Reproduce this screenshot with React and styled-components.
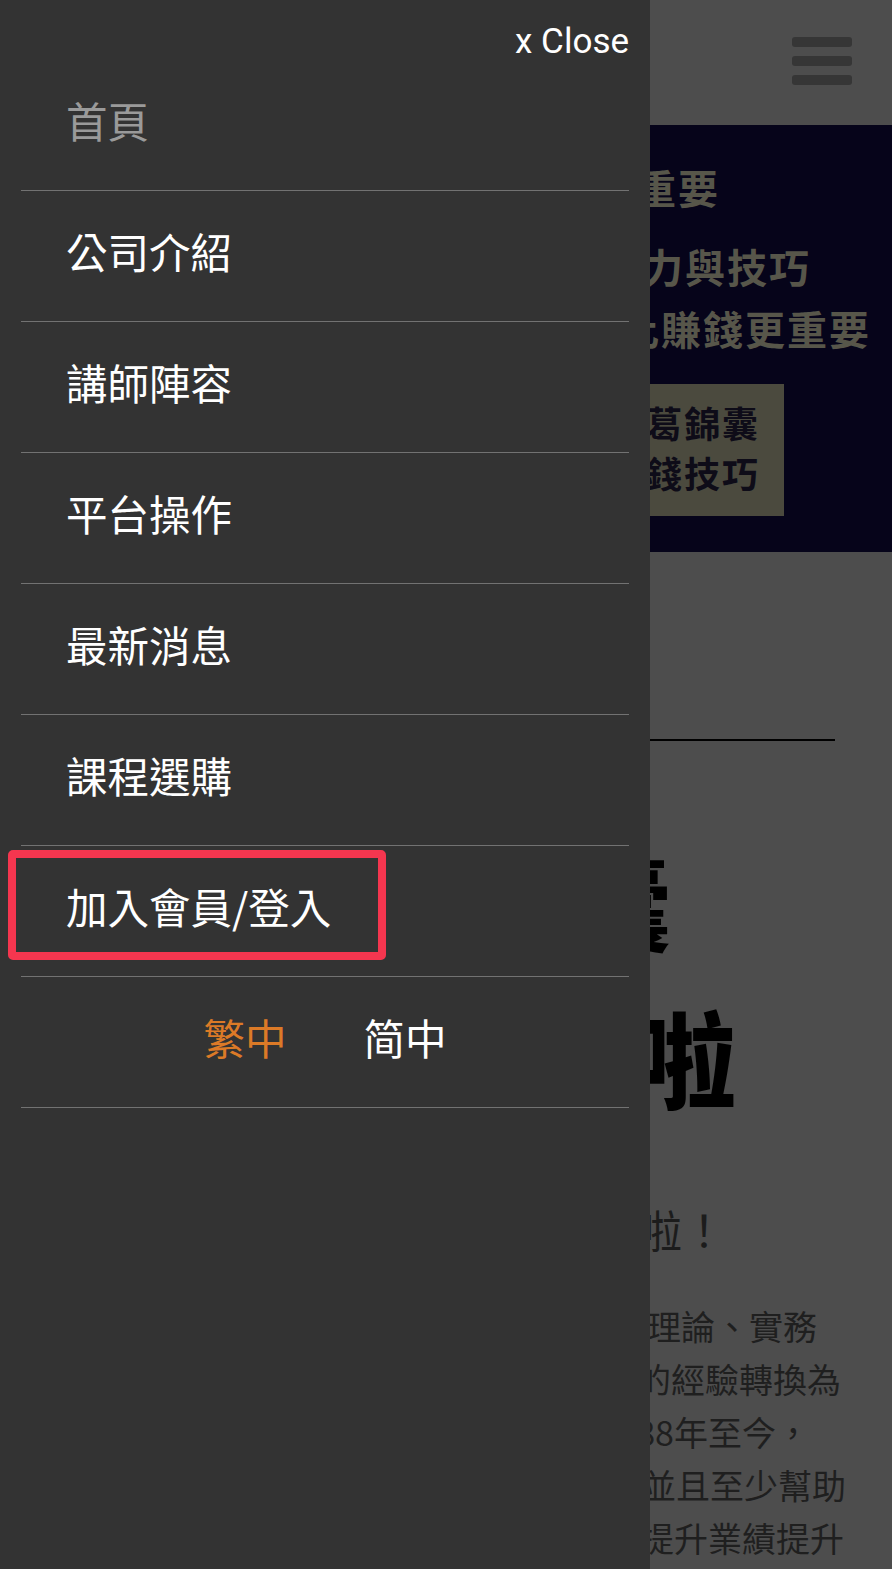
import React from "react";
import styled, { createGlobalStyle } from "styled-components";

const GlobalStyle = createGlobalStyle`
  html, body {
    margin: 0;
    padding: 0;
    background: #4d4d4d;
  }
  body {
    font-family: "Noto Sans CJK TC", "Noto Sans", sans-serif;
    overflow: hidden;
  }
  *, *::before, *::after { box-sizing: border-box; }
`;

/* ---------- dimmed page behind the drawer ---------- */

const Page = styled.div`
  width: 100%;
  min-height: 100vh;
  background: #4d4d4d;
  overflow: hidden;
`;

const Header = styled.header`
  height: 125px;
  display: flex;
  justify-content: flex-end;
  padding: 37px 40px 0 0;
  background: #4d4d4d;
`;

const Burger = styled.button`
  display: flex;
  flex-direction: column;
  gap: 9px;
  width: 60px;
  padding: 0;
  border: none;
  background: none;
`;

const BurgerBar = styled.span`
  display: block;
  height: 10px;
  border-radius: 3px;
  background: #363636;
`;

const Banner = styled.section`
  background: #06041a;
  padding: 37px 0 36px;
  display: flex;
  flex-direction: column;
  gap: 12px;
`;

const BannerLine = styled.div`
  font-size: 40px;
  font-weight: 700;
  line-height: 50px;
  letter-spacing: 2px;
  color: #57564a;
  white-space: nowrap;
  text-align: right;
  padding-right: ${(p) => p.$right}px;
  margin-bottom: ${(p) => p.$after || 0}px;
`;

const Badge = styled.div`
  align-self: flex-end;
  margin: 19px 108px 0 0;
  padding: 13px 24px 19px 40px;
  background: #4b4a3e;
`;

const BadgeLine = styled.div`
  font-size: 36px;
  font-weight: 700;
  line-height: 50px;
  letter-spacing: 2px;
  color: #0e0c18;
  white-space: nowrap;
  text-align: right;
`;

const Content = styled.section`
  padding-top: 187px;
  display: flex;
  flex-direction: column;
`;

const Rule = styled.hr`
  margin: 0 57px;
  border: none;
  height: 2px;
  background: #000;
`;

const BigTitle = styled.h1`
  margin: 82px 0 0;
  font-size: 104px;
  font-weight: 900;
  line-height: 155px;
  color: #000;
`;

const BigLine = styled.span`
  display: block;
  white-space: nowrap;
  text-align: right;
  padding-right: ${(p) => p.$right}px;
`;

const SubTitle = styled.h2`
  margin: 66px 0 0;
  font-size: 44px;
  font-weight: 400;
  line-height: 60px;
  color: #1c1c1c;
  white-space: nowrap;
  text-align: right;
  padding-right: 166px;
`;

const Paragraph = styled.p`
  margin: 40px 0 0;
  font-size: 34px;
  line-height: 53px;
  color: #1f1f1f;
`;

const ParaLine = styled.span`
  display: block;
  white-space: nowrap;
  text-align: right;
  padding-right: ${(p) => p.$right}px;
`;

/* ---------- drawer ---------- */

const Drawer = styled.nav`
  position: fixed;
  top: 0;
  left: 0;
  bottom: 0;
  width: 650px;
  background: #333333;
  display: flex;
  flex-direction: column;
`;

const CloseBar = styled.div`
  height: 60px;
  padding: 21px 21px 0 0;
  display: flex;
  justify-content: flex-end;
  align-items: flex-start;
`;

const CloseButton = styled.button`
  padding: 0;
  border: none;
  background: none;
  font-family: Roboto, "Liberation Sans", sans-serif;
  font-size: 35px;
  line-height: 42px;
  color: #ffffff;
  cursor: pointer;
`;

const MenuList = styled.ul`
  list-style: none;
  margin: 0 21px;
  padding: 0;
`;

const MenuItem = styled.li`
  position: relative;
  height: 131px;
  padding: 0 0 10px 45px;
  border-bottom: 1px solid #727272;
  display: flex;
  align-items: center;
  justify-content: ${(p) => (p.$center ? "center" : "flex-start")};
  gap: 77px;
  ${(p) => p.$center && "padding-left: 0;"}

  ${(p) =>
    p.$highlight &&
    `
    &::after {
      content: "";
      position: absolute;
      left: -13px;
      top: 4px;
      width: 378px;
      height: 110px;
      border: 8px solid #f5364f;
      border-radius: 5px;
      pointer-events: none;
    }
  `}
`;

const MenuLink = styled.a`
  font-size: 41.5px;
  line-height: 50px;
  color: ${(p) => p.$color || "#ffffff"};
  text-decoration: none;
  white-space: nowrap;
`;

const menu = [
  { label: "首頁", color: "#9a9a9a" },
  { label: "公司介紹" },
  { label: "講師陣容" },
  { label: "平台操作" },
  { label: "最新消息" },
  { label: "課程選購" },
  { label: "加入會員/登入", highlight: true },
];

const paragraph = [
  { text: "合理論、實務", right: 75 },
  { text: "積的經驗轉換為", right: 51 },
  { text: "國88年至今，", right: 82 },
  { text: "員並且至少幫助", right: 46 },
  { text: "度提升業績提升", right: 48 },
];

export default function App() {
  return (
    <>
      <GlobalStyle />
      <Page>
        <Header>
          <Burger aria-label="menu">
            <BurgerBar />
            <BurgerBar />
            <BurgerBar />
          </Burger>
        </Header>
        <Banner>
          <BannerLine $right={172} $after={17}>
            非常重要
          </BannerLine>
          <BannerLine $right={81}>專業能力與技巧</BannerLine>
          <BannerLine $right={21}>往往比賺錢更重要</BannerLine>
          <Badge>
            <BadgeLine>諸葛錦囊</BadgeLine>
            <BadgeLine>賺錢技巧</BadgeLine>
          </Badge>
        </Banner>
        <Content>
          <Rule />
          <BigTitle>
            <BigLine $right={220}>錦囊</BigLine>
            <BigLine $right={156}>線啦</BigLine>
          </BigTitle>
          <SubTitle>上線啦！</SubTitle>
          <Paragraph>
            {paragraph.map((l) => (
              <ParaLine key={l.text} $right={l.right}>
                {l.text}
              </ParaLine>
            ))}
          </Paragraph>
        </Content>
      </Page>

      <Drawer>
        <CloseBar>
          <CloseButton>x Close</CloseButton>
        </CloseBar>
        <MenuList>
          {menu.map((m) => (
            <MenuItem key={m.label} $highlight={m.highlight}>
              <MenuLink href="#" $color={m.color}>
                {m.label}
              </MenuLink>
            </MenuItem>
          ))}
          <MenuItem $center>
            <MenuLink href="#" $color="#dc7a27">
              繁中
            </MenuLink>
            <MenuLink href="#">简中</MenuLink>
          </MenuItem>
        </MenuList>
      </Drawer>
    </>
  );
}
